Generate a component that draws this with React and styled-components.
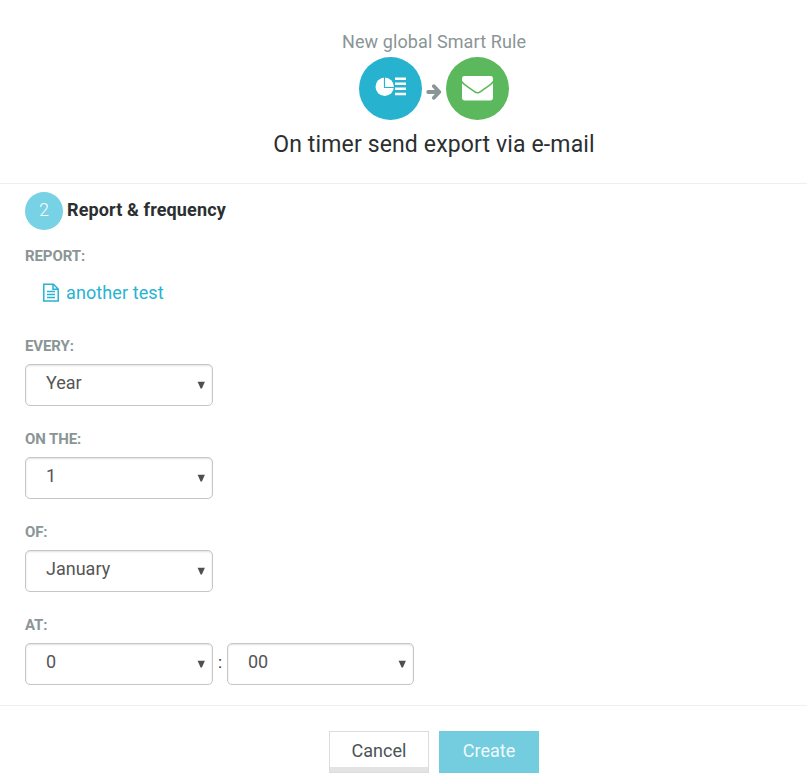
import React from 'react';
import styled, { createGlobalStyle } from 'styled-components';

const GlobalStyle = createGlobalStyle`
  *, *::before, *::after { box-sizing: border-box; }
  body {
    margin: 0;
    background: #fff;
    color: #2b2f31;
    font-family: Roboto, "Liberation Sans", sans-serif;
    font-size: 18px;
    line-height: 21px;
  }
`;

const Dialog = styled.main`
  height: 782px;
`;

const Header = styled.header`
  display: flex;
  flex-direction: column;
  align-items: center;
  height: 184px;
  padding: 31px 0 0 61px;
  border-bottom: 1px solid #efefef;
`;

const Caption = styled.div`
  color: #8a9596;
  letter-spacing: 0.1px;
`;

const Flow = styled.div`
  display: flex;
  align-items: center;
  margin-top: 5px;
`;

const StepIcon = styled.div`
  display: flex;
  justify-content: center;
  width: 63px;
  height: 63px;
  padding-top: ${(p) => p.$top}px;
  border-radius: 50%;
  background: ${(p) => p.$color};
`;

const ArrowIcon = styled.svg`
  display: block;
  width: 16px;
  height: 16px;
  margin: 7px 4px 0;
`;

const Glyph = styled.svg`
  display: block;
  flex: none;
`;

const Title = styled.h1`
  margin: 11px 0 0;
  font-size: 23px;
  font-weight: 400;
  line-height: 27px;
  letter-spacing: 0.14px;
`;

const Body = styled.section`
  height: 522px;
  padding: 8px 25px 0;
  border-bottom: 1px solid #efefef;
`;

const StepHeading = styled.div`
  display: flex;
  align-items: center;
  gap: 4px;
  height: 38px;
`;

const StepNumber = styled.span`
  display: flex;
  align-items: center;
  justify-content: center;
  width: 38px;
  height: 38px;
  padding-bottom: 3px;
  border-radius: 50%;
  background: #76d2e4;
  color: #fff;
  font-weight: 300;
`;

const StepTitle = styled.h2`
  margin: 0 0 4px;
  font-size: 18px;
  font-weight: 700;
  letter-spacing: 0.13px;
`;

const Field = styled.div`
  margin-top: ${(p) => p.$gap ?? 24}px;
`;

const Label = styled.div`
  color: #8a9596;
  font-size: 15px;
  font-weight: 700;
  line-height: 18px;
  letter-spacing: -0.1px;
  text-transform: uppercase;
`;

const ReportLink = styled.a`
  display: flex;
  align-items: center;
  gap: 7px;
  height: 21px;
  margin: 17px 0 0 18px;
  color: #27b3d1;
  letter-spacing: 0.1px;
`;

const SelectRow = styled.div`
  display: flex;
  margin-top: 9px;
`;

const SelectBox = styled.div`
  display: flex;
  justify-content: space-between;
  width: ${(p) => p.$width ?? 188}px;
  height: 42px;
  padding: 7px 7px 0 20px;
  border: 1px solid #c6c6c6;
  border-radius: 5px;
  box-shadow: inset 0 1px 2px rgba(0, 0, 0, 0.12);
  color: #555;
`;

const Caret = styled.svg`
  display: block;
  width: 8px;
  height: 8px;
  margin-top: 9px;
`;

const Colon = styled.span`
  width: 14px;
  padding-top: 9px;
  font-size: 17px;
  text-align: center;
`;

const Footer = styled.footer`
  display: flex;
  justify-content: center;
  gap: 10px;
  padding: 25px 0 0 61px;
`;

const Button = styled.button`
  width: 100px;
  height: 42px;
  padding: 0 0 3px;
  border: ${(p) => (p.$primary ? '0' : '1px solid #dcdcdc')};
  background: ${(p) => (p.$primary ? '#73cddf' : '#fff')};
  box-shadow: ${(p) => (p.$primary ? 'none' : 'inset 0 -5px 0 #e3e3e3')};
  color: ${(p) => (p.$primary ? '#f0fafc' : '#4a5456')};
  font: inherit;
`;

function Select({ value, width }) {
  return (
    <SelectBox $width={width}>
      <span>{value}</span>
      <Caret viewBox="0 0 8 8" aria-hidden="true">
        <path d="M0.6 0.7H7.9L4.9 7.5H3.6Z" fill="#4f4f4f" />
      </Caret>
    </SelectBox>
  );
}

const schedule = [
  { label: 'Every:', value: 'Year', gap: 34 },
  { label: 'On the:', value: '1' },
  { label: 'Of:', value: 'January' },
];

export default function App() {
  return (
    <>
      <GlobalStyle />
      <Dialog>
        <Header>
          <Caption>New global Smart Rule</Caption>
          <Flow>
            <StepIcon $color="#27b2d0" $top={20}>
              <Glyph width="31" height="20" viewBox="0 0 31 20" fill="#fff">
                <circle cx="9.7" cy="9.7" r="9.2" />
                <path d="M9.5 0V10.5H19" fill="none" stroke="#27b2d0" strokeWidth="1.2" />
                <path d="M20 0.4H31V3H20ZM20 5.4H31V8H20ZM20 10.5H31V13.1H20ZM20 15.7H31V18.3H20Z" />
              </Glyph>
            </StepIcon>
            <ArrowIcon viewBox="0 0 16 16" aria-hidden="true">
              <path d="M2.2 8H12M7.9 2.2L13.3 8L7.9 13.8" fill="none" stroke="#8a9596" strokeWidth="3.8" strokeLinecap="round" strokeLinejoin="round" />
            </ArrowIcon>
            <StepIcon $color="#5cb85c" $top={19}>
              <Glyph width="31" height="25" viewBox="0 0 31 25">
                <rect width="31" height="24.4" rx="2.4" fill="#fff" />
                <path d="M-0.3 5.4Q1 7.6 4 9.6L12.5 15.6Q15.5 17.8 18.5 15.6L27 9.6Q30 7.6 31.3 5.4" fill="none" stroke="#5cb85c" strokeWidth="1.6" />
              </Glyph>
            </StepIcon>
          </Flow>
          <Title>On timer send export via e-mail</Title>
        </Header>

        <Body>
          <StepHeading>
            <StepNumber>2</StepNumber>
            <StepTitle>Report &amp; frequency</StepTitle>
          </StepHeading>

          <Field $gap={17}>
            <Label>Report:</Label>
            <ReportLink>
              <Glyph width="16" height="20" viewBox="0 0 16 20" fill="none" stroke="#27b3d1" strokeWidth="1.5">
                <path d="M0.8 1.2H10.4L15.2 6V18H0.8ZM10 1.2V6.3H15.2" />
                <path d="M4 8.4H12M4 11.4H12M4 14.4H12" />
              </Glyph>
              another test
            </ReportLink>
          </Field>

          {schedule.map(({ label, value, gap }) => (
            <Field key={label} $gap={gap}>
              <Label>{label}</Label>
              <SelectRow>
                <Select value={value} />
              </SelectRow>
            </Field>
          ))}

          <Field>
            <Label>At:</Label>
            <SelectRow>
              <Select value="0" />
              <Colon>:</Colon>
              <Select value="00" width={187} />
            </SelectRow>
          </Field>
        </Body>

        <Footer>
          <Button>Cancel</Button>
          <Button $primary>Create</Button>
        </Footer>
      </Dialog>
    </>
  );
}
